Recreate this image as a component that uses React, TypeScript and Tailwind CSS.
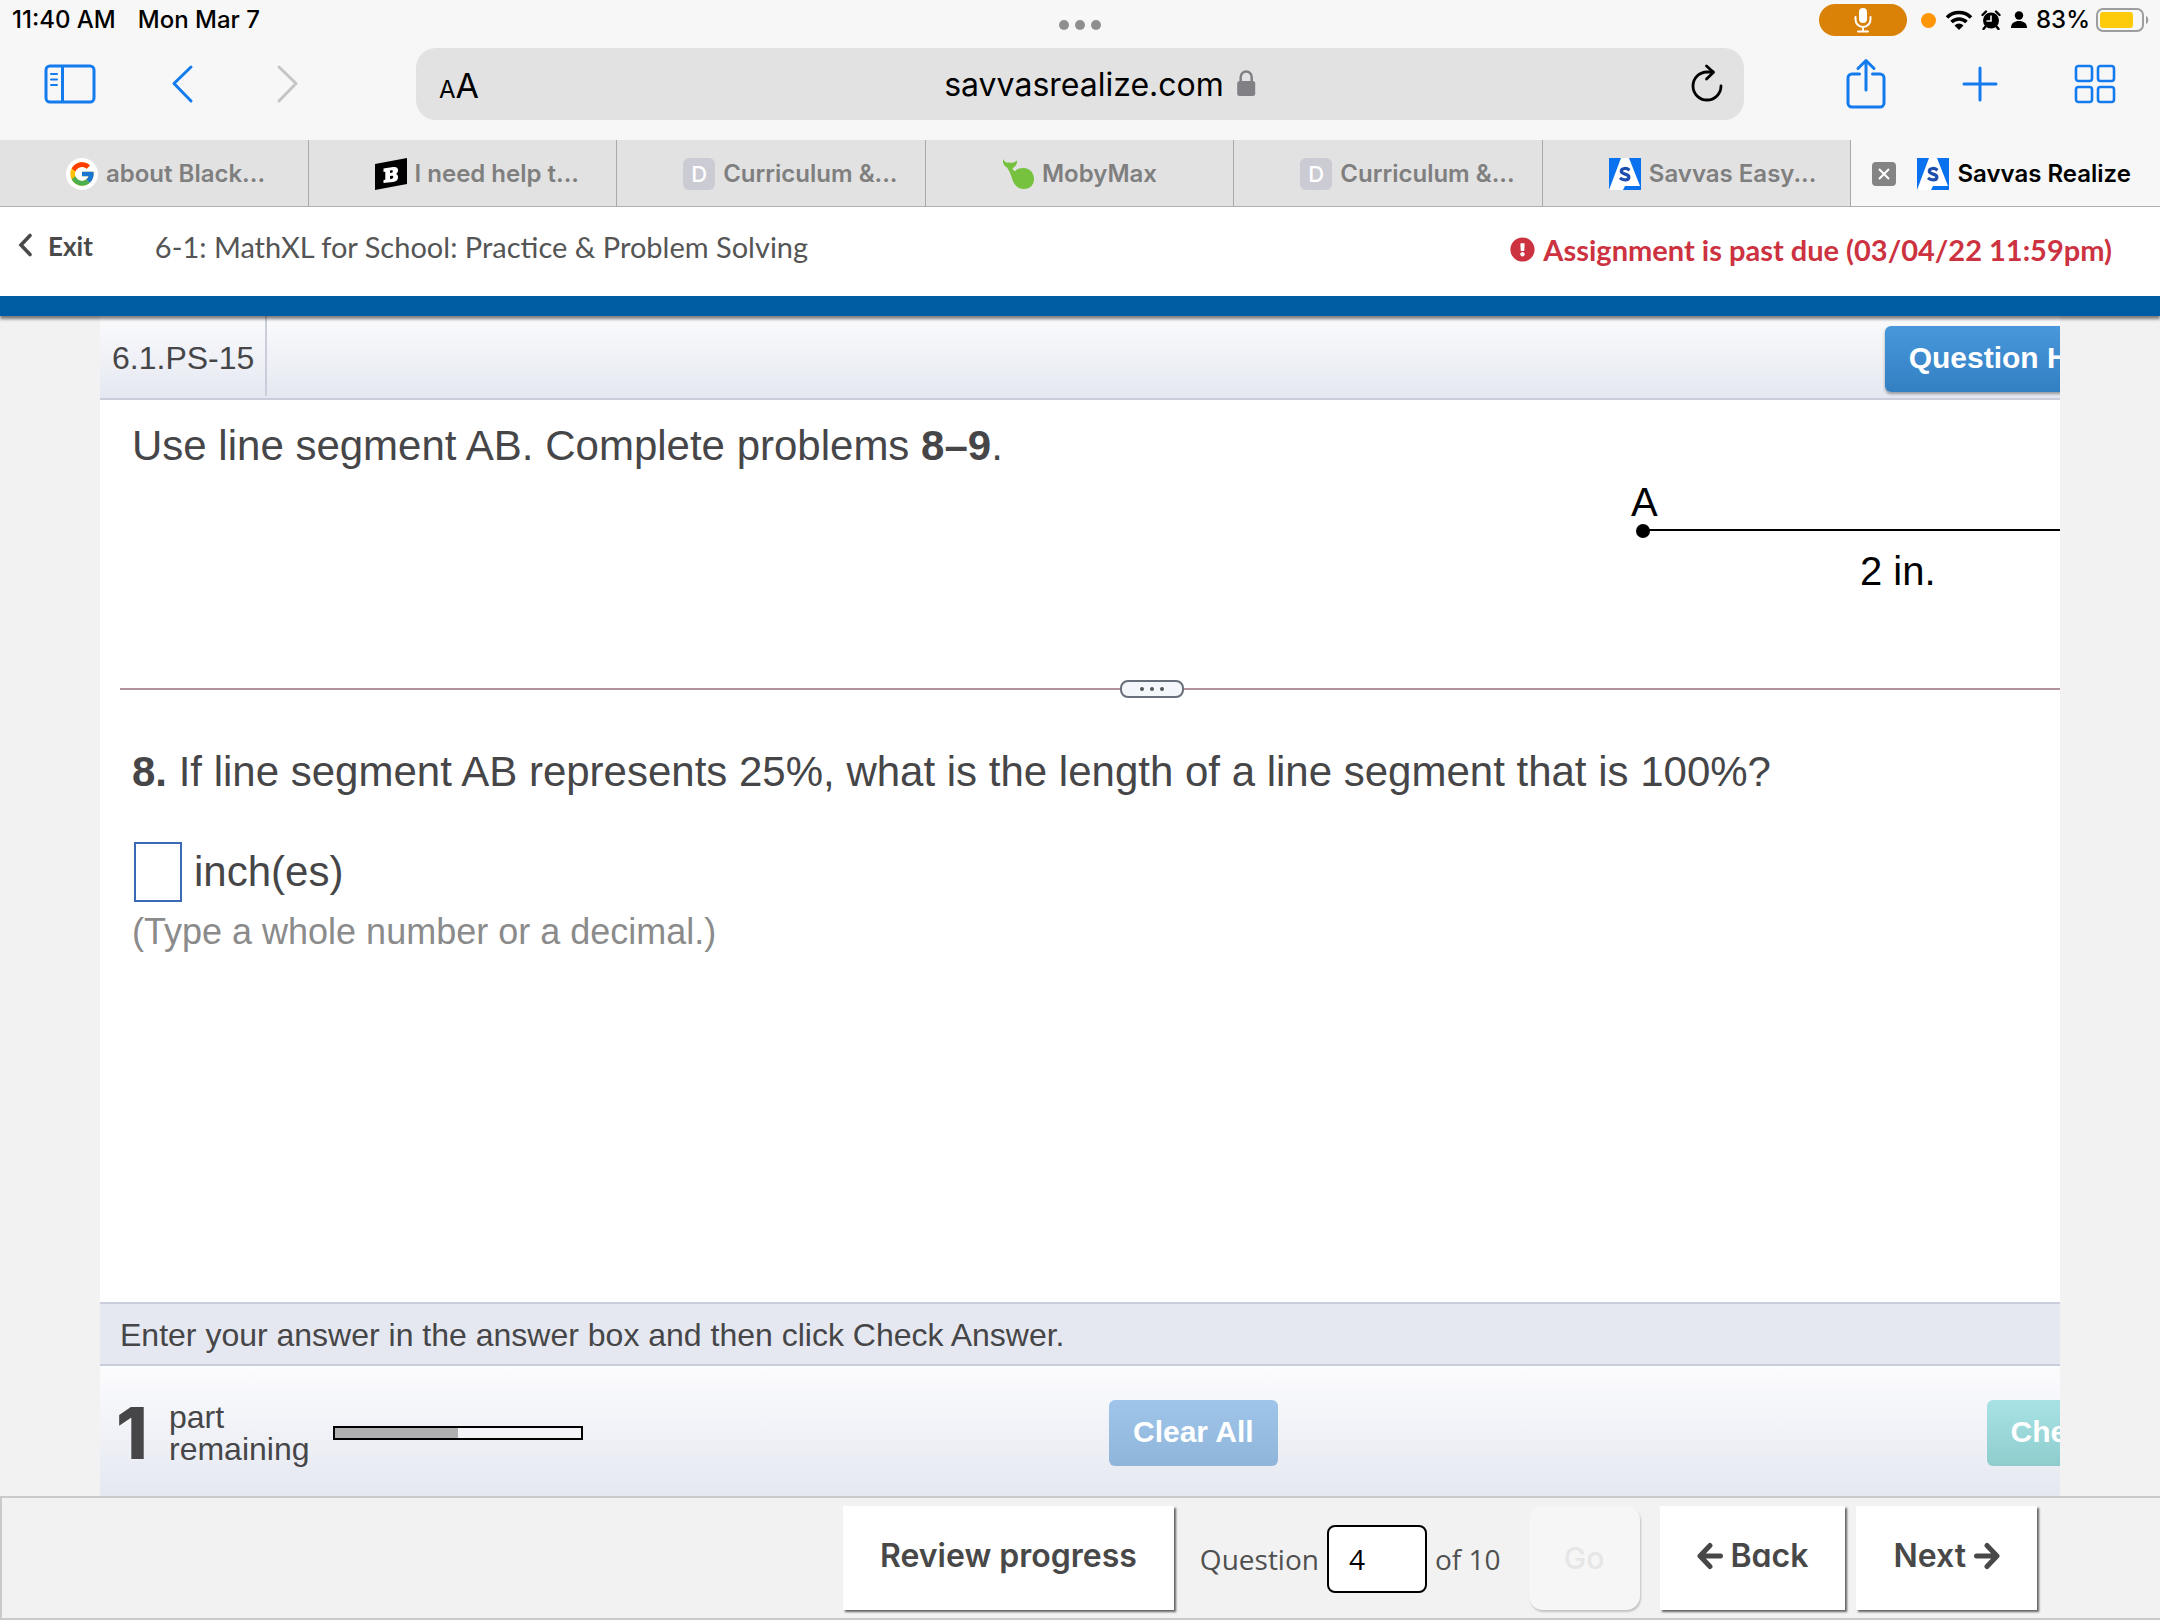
import { type JSX, type ReactNode } from "react";
import { FaExclamationCircle } from "react-icons/fa";
import { FcGoogle } from "react-icons/fc";

type TabItem = {
  title: string;
  icon: ReactNode;
  centered?: boolean;
  active?: boolean;
};

function BrainlyIcon() {
  return (
    <svg viewBox="0 0 32 32" className="h-8 w-8 shrink-0">
      <path d="M0 6 32 0v26L0 32z" fill="#000" />
      <path
        fillRule="evenodd"
        d="M8.500 10.500 18 9c4-.5 5.500 1.500 5 4-.3 1.500-1 2.300-2 3 1.500.6 2.200 1.800 2 3.800-.3 2.700-2 3.800-5 4.200l-9.500 1v-3l1.800-.3v-8l-1.800.3zM15 12.500v2.600l1.700-.3c1.600-.3 1.600-2.800 0-2.500zM15 18v3l2-.3c1.700-.3 1.700-3.200 0-2.900z"
        fill="#fff"
      />
    </svg>
  );
}

function LetterIcon() {
  return (
    <span className="flex h-8 w-8 shrink-0 items-center justify-center rounded-md bg-[#cbcbd3] text-[22px] font-medium text-white">
      D
    </span>
  );
}

function WhaleIcon() {
  return (
    <svg viewBox="0 0 32 32" className="h-8 w-8 shrink-0" fill="#76c23e">
      <path d="M1.500 1C2 4 5 5 8 4.500c1 .5 4 .5 7-2 .5 3.500-2 6.500-4.500 7.500.5 2 1.500 3.500 3 3 1.500-2 4.500-3 8-3C28 10 32 15 32 21s-4 10-10 10-9.500-4-11.500-9C9 17 8 14 5 9.500 2 8 0 4.500 1.500 1z" />
    </svg>
  );
}

function SavvasIcon() {
  return (
    <svg viewBox="0 0 32 32" className="h-8 w-8 shrink-0">
      <rect width="32" height="32" fill="#0a71ef" />
      <path d="M12 0h8l11 28H16l-2 4H0z" fill="#fff" />
      <path
        d="M20.500 12.200c-1.500-1.300-3.200-1.900-5-1.700-2 .2-3.200 1.300-3.200 2.800 0 3.600 7.600 2.100 7.600 5.700 0 1.800-1.600 2.900-3.900 2.900-2 0-3.700-.7-5-2"
        fill="none"
        stroke="#1f4fae"
        strokeWidth="3.200"
      />
    </svg>
  );
}

const tabs: TabItem[] = [
  {
    title: "about Black...",
    icon: (
      <span className="flex h-8 w-8 shrink-0 items-center justify-center rounded-full bg-white">
        <FcGoogle size={28} />
      </span>
    ),
  },
  { title: "I need help t...", icon: <BrainlyIcon /> },
  { title: "Curriculum &...", icon: <LetterIcon /> },
  { title: "MobyMax", icon: <WhaleIcon />, centered: true },
  { title: "Curriculum &...", icon: <LetterIcon /> },
  { title: "Savvas Easy...", icon: <SavvasIcon /> },
  { title: "Savvas Realize", icon: <SavvasIcon />, active: true },
];

function StatusBar() {
  return (
    <div className="relative flex h-10 items-center justify-between pr-[10px] pl-3 text-[24px] font-medium text-black">
      <div className="flex gap-[22px]">
        <span>11:40 AM</span>
        <span>Mon Mar 7</span>
      </div>

      <div className="absolute top-5 left-1/2 flex -translate-x-1/2 gap-[6px]">
        <span className="h-[10px] w-[10px] rounded-full bg-[#8e8e90]" />
        <span className="h-[10px] w-[10px] rounded-full bg-[#8e8e90]" />
        <span className="h-[10px] w-[10px] rounded-full bg-[#8e8e90]" />
      </div>

      <div className="flex items-center">
        <span className="mr-[14px] flex h-8 w-[88px] items-center justify-center rounded-full bg-[#d98207]">
          <svg viewBox="0 0 18 26" className="h-[26px] w-[18px]">
            <rect x="5" y="1" width="8" height="15" rx="4" fill="#fff" />
            <path
              d="M1.500 10v2.500a7.500 7.500 0 0 0 15 0V10M9 20v4M4 24.500h10"
              fill="none"
              stroke="#fff"
              strokeWidth="2"
              strokeLinecap="round"
            />
          </svg>
        </span>
        <span className="mr-[9px] h-[15px] w-[15px] rounded-full bg-[#ff9508]" />
        {/* Wi-Fi */}
        <svg viewBox="0 0 28 20" className="mr-2 h-5 w-7">
          <path
            d="M2 7.500a17 17 0 0 1 24 0M6.500 12a10.700 10.700 0 0 1 15 0"
            fill="none"
            stroke="#000"
            strokeWidth="3.600"
          />
          <path d="M14 20l-4.500-4.600a6.500 6.500 0 0 1 9 0z" fill="#000" />
        </svg>
        {/* Alarm */}
        <svg viewBox="0 0 20 20" className="mr-[10px] h-5 w-5">
          <circle cx="10" cy="10.500" r="8" fill="#000" />
          <path
            d="M1.500 5 5 1.500M18.500 5 15 1.500M4.500 16.500 2.500 19M15.500 16.500l2 2.500"
            stroke="#000"
            strokeWidth="2.400"
            strokeLinecap="round"
          />
          <path d="M10 5.500v5.500H5.500" fill="none" stroke="#f7f7f7" strokeWidth="1.600" />
        </svg>
        <svg viewBox="0 0 16 18" className="mr-[9px] h-[18px] w-4">
          <circle cx="8" cy="4.500" r="4.200" />
          <path d="M0 17c0-5 3.500-7 8-7s8 2 8 7z" />
        </svg>
        <span className="mr-[6px]">83%</span>
        <svg viewBox="0 0 54 24" className="h-6 w-[54px]">
          <rect x="1" y="1" width="46" height="22" rx="6" fill="none" stroke="#9d9d9f" strokeWidth="2" />
          <rect x="4" y="4" width="33" height="16" rx="3" fill="#fdca0a" />
          <path d="M50 8c3 1 3 7 0 8z" fill="#9d9d9f" />
        </svg>
      </div>
    </div>
  );
}

function Toolbar() {
  return (
    <div className="flex items-center pt-2 pr-11 pb-5 pl-11 text-[#147bee]">
      <button type="button" aria-label="Show sidebar">
        <svg viewBox="0 0 52 40" className="h-10 w-[52px]" fill="none" stroke="currentColor" strokeWidth="3">
          <rect x="2" y="2" width="48" height="36" rx="4" />
          <path d="M18.500 2v36" />
          <path d="M7 10h6M7 15.500h6M7 21h6" strokeWidth="2" strokeLinecap="round" />
        </svg>
      </button>
      <button type="button" aria-label="Back" className="ml-[75px]">
        <svg viewBox="0 0 24 40" className="h-10 w-6" fill="none" stroke="currentColor" strokeWidth="3" strokeLinecap="round" strokeLinejoin="round">
          <path d="M20 3 3 19.500 20 37" />
        </svg>
      </button>
      <button type="button" aria-label="Forward" disabled className="ml-20 text-[#c5c5c7]">
        <svg viewBox="0 0 24 40" className="h-10 w-6" fill="none" stroke="currentColor" strokeWidth="3" strokeLinecap="round" strokeLinejoin="round">
          <path d="M4 3l17 16.500L4 37" />
        </svg>
      </button>

      {/* Address bar */}
      <div className="relative mr-[118px] ml-[117px] flex h-[72px] flex-1 items-center justify-between rounded-[20px] bg-[#e2e2e2] pr-5 pl-[23px] text-black">
        <button type="button" aria-label="Reader options" className="flex items-baseline pt-[2px]">
          <span className="text-[24px]">A</span>
          <span className="text-[34px]">A</span>
        </button>
        <div className="absolute inset-y-0 left-1/2 flex -translate-x-1/2 items-center gap-3 pt-[2px] pl-10">
          <span className="text-[32px]">savvasrealize.com</span>
          <svg viewBox="0 0 20 28" className="mb-1 h-7 w-5">
            <rect x="1" y="12" width="18" height="15" rx="2.500" fill="#808085" />
            <path d="M4.500 13V8a5.500 5.500 0 0 1 11 0v5" fill="none" stroke="#808085" strokeWidth="2.500" />
          </svg>
        </div>
        <button type="button" aria-label="Reload">
          <svg viewBox="0 0 34 40" className="h-10 w-[34px]" fill="none" stroke="currentColor" strokeWidth="2.800" strokeLinecap="round" strokeLinejoin="round">
            <path d="M31 22a14 14 0 1 1-14-14h6" />
            <path d="M16.500 2 23.500 8.200 16.500 15" />
          </svg>
        </button>
      </div>

      <div className="flex items-center">
        <button type="button" aria-label="Share" className="-ml-4">
          <svg viewBox="0 0 40 52" className="mb-[2px] h-[52px] w-10" fill="none" stroke="currentColor" strokeWidth="3" strokeLinecap="round" strokeLinejoin="round">
            <path d="M13.500 17H6a4 4 0 0 0-4 4v25a4 4 0 0 0 4 4h28a4 4 0 0 0 4-4V21a4 4 0 0 0-4-4h-7.500" />
            <path d="M20 33V4M12 11.500 20 3.500l8 8" />
          </svg>
        </button>
        <button type="button" aria-label="New tab" className="ml-[76px]">
          <svg viewBox="0 0 36 36" className="h-9 w-9" stroke="currentColor" strokeWidth="3" strokeLinecap="round">
            <path d="M18 2v32M2 18h32" />
          </svg>
        </button>
        <button type="button" aria-label="Tab overview" className="ml-[76px]">
          <svg viewBox="0 0 42 40" className="h-10 w-[42px]" fill="none" stroke="currentColor" strokeWidth="2.600">
            <rect x="2" y="2" width="16" height="15" rx="2.500" />
            <rect x="24" y="2" width="16" height="15" rx="2.500" />
            <rect x="2" y="23" width="16" height="15" rx="2.500" />
            <rect x="24" y="23" width="16" height="15" rx="2.500" />
          </svg>
        </button>
      </div>
    </div>
  );
}

function Tab({ title, icon, centered, active }: TabItem) {
  return (
    <div
      className={`relative flex h-[67px] items-center gap-2 border-b border-[#b0b0b0] pt-[2px] text-[24px] font-semibold whitespace-nowrap ${
        active ? "text-black" : "border-r border-r-[#a9a9a9] bg-[#e2e2e2] text-[#7f7f7f]"
      } ${centered ? "justify-center" : "pl-[66px]"}`}
    >
      {active && (
        <button
          type="button"
          aria-label="Close tab"
          className="absolute left-[21px] flex h-6 w-6 items-center justify-center rounded-sm bg-[#848484]"
        >
          <svg viewBox="0 0 12 12" className="h-3 w-3" stroke="#fff" strokeWidth="2">
            <path d="M1 1l10 10M11 1 1 11" />
          </svg>
        </button>
      )}
      {icon}
      <span>{title}</span>
    </div>
  );
}

function LessonHeader() {
  return (
    <header className="relative z-10 flex h-[109px] items-center justify-between border-b-[20px] border-[#005da4] bg-white pr-12 pb-[10px] pl-[18px] font-[Lato] shadow-[0_3px_3px_rgba(0,0,0,0.5)]">
      <div className="flex items-center">
        <a href="#" className="flex items-center gap-4 text-[26px] font-bold text-[#4a4a4a]">
          <svg viewBox="0 0 14 24" className="mb-1 h-6 w-[14px]" fill="none" stroke="currentColor" strokeWidth="3.600" strokeLinecap="round">
            <path d="M12 2.500 3 12l9 9.500" />
          </svg>
          Exit
        </a>
        <h1 className="ml-[62px] text-[29px] text-[#555]">6-1: MathXL for School: Practice &amp; Problem Solving</h1>
      </div>
      <p className="flex items-center gap-2 pt-[6px] text-[29px] font-bold text-[#cc323f]">
        <FaExclamationCircle size={25} />
        Assignment is past due (03/04/22 11:59pm)
      </p>
    </header>
  );
}

function SegmentFigure() {
  return (
    <svg viewBox="0 0 584 130" className="h-[130px] w-[584px] shrink-0 font-['Liberation_Sans'] text-[40px]">
      <text x="11" y="36">A</text>
      <circle cx="23" cy="51" r="7" />
      <path d="M23 50h512" stroke="#000" strokeWidth="2" />
      <text x="240" y="105">2 in.</text>
    </svg>
  );
}

function Exercise() {
  return (
    <main className="mx-[100px] flex flex-1 flex-col overflow-hidden bg-white font-['Liberation_Sans',Arial,sans-serif] text-[#464648]">
      {/* The player is wider than its frame, so the right edge is cut off */}
      <div className="flex w-[calc(100%+144px)] flex-1 flex-col">
        <div className="flex h-[84px] items-start justify-between border-b-2 border-[#cacddb] bg-linear-to-b from-[#fbfbfd] to-[#e5e8f1] pr-[68px]">
          <div className="flex h-20 items-center border-r-2 border-[#cacddb] pt-1 pr-[11px] pl-3 text-[32px]">6.1.PS-15</div>
          <button
            type="button"
            className="mt-[10px] h-[66px] rounded-md bg-linear-to-b from-[#4998dc] to-[#327fc2] px-6 pb-1 text-[30px] font-bold text-white shadow-[0_2px_3px_rgba(0,0,0,0.35)]"
          >
            Question Help
          </button>
        </div>

        <section className="flex h-[288px] justify-between pl-8 text-[42px]">
          <p className="mt-[22px] leading-[48px]">
            Use line segment AB. Complete problems <b>8–9</b>.
          </p>
          <div className="mt-20">
            <SegmentFigure />
          </div>
        </section>

        {/* Splitter */}
        <div className="relative mx-5 h-[2px] bg-[#b1939d]">
          <button
            type="button"
            aria-label="Resize panes"
            className="absolute -top-2 left-1/2 flex h-[18px] w-16 -translate-x-1/2 items-center justify-center gap-[6px] rounded-lg border-2 border-[#67707a] bg-[#f3f6fa]"
          >
            <span className="h-1 w-1 rounded-full bg-[#555]" />
            <span className="h-1 w-1 rounded-full bg-[#555]" />
            <span className="h-1 w-1 rounded-full bg-[#555]" />
          </button>
        </div>

        <section className="flex-1 pt-[58px] pl-8 text-[42px] leading-[48px]">
          <p>
            <b>8.</b> If line segment AB represents 25%, what is the length of a line segment that is 100%?
          </p>
          <div className="mt-[46px] flex items-center gap-3">
            <input id="answer" type="text" className="ml-[2px] h-[60px] w-12 border-2 border-[#3a69b5] px-1 text-center outline-none" />
            <label htmlFor="answer">inch(es)</label>
          </div>
          <p className="mt-[6px] text-[36px] text-[#8b8b8b]">(Type a whole number or a decimal.)</p>
        </section>

        <p className="flex h-16 items-center border-y-2 border-[#cacddb] bg-[#e5e8f0] pt-[2px] pl-5 text-[32px]">
          Enter your answer in the answer box and then click Check Answer.
        </p>

        <div className="flex h-[130px] items-center bg-linear-to-b from-[#fcfcfe] to-[#e5e8f1] pt-1 pl-4">
          <span className="w-[53px] shrink-0 font-[Inter] text-[72px] leading-[72px] font-extrabold">1</span>
          <label htmlFor="parts" className="w-[164px] shrink-0 text-[32px] leading-8">
            part
            <br />
            remaining
          </label>
          <div
            id="parts"
            role="progressbar"
            aria-valuenow={50}
            className="h-[14px] w-[250px] shrink-0 border-2 border-black bg-[#f4f4f8]"
          >
            <div className="h-full w-1/2 bg-[#b0b0b0]" />
          </div>
          <button
            type="button"
            disabled
            className="ml-[526px] h-[66px] shrink-0 rounded-md bg-linear-to-b from-[#a0c5ea] to-[#8fb5da] px-6 pb-1 text-[30px] font-bold text-white"
          >
            Clear All
          </button>
          <button
            type="button"
            disabled
            className="ml-[709px] h-[66px] shrink-0 rounded-md bg-linear-to-b from-[#a8e2e6] to-[#8fcdcd] px-6 pb-1 text-[30px] font-bold whitespace-nowrap text-white"
          >
            Check Answer
          </button>
        </div>
      </div>
    </main>
  );
}

function Arrow({ right }: { right?: boolean }) {
  return (
    <svg
      viewBox="0 0 26 28"
      className="h-7 w-[26px]"
      fill="none"
      stroke="currentColor"
      strokeWidth="5"
      strokeLinecap="round"
      strokeLinejoin="round"
    >
      <path d={right ? "M2.500 14H22M13 3.500 23 14 13 24.500" : "M23.500 14H4M13 3.500 3 14l10 10.500"} />
    </svg>
  );
}

function NavButton({ children }: { children: ReactNode }) {
  return (
    <button
      type="button"
      className="flex h-[104px] items-center gap-2 bg-white px-[37px] pb-1 text-[32px] font-semibold text-[#484848] shadow-[2px_2px_2px_rgba(0,0,0,0.6)] [font-feature-settings:'cv11']"
    >
      {children}
    </button>
  );
}

function BottomBar() {
  return (
    <footer className="flex h-[124px] items-center justify-end border-y-2 border-l-2 border-[#c8cacb] bg-[#f2f2f2] pr-[123px]">
      <NavButton>Review progress</NavButton>
      <div className="ml-[26px] flex items-center gap-2 pt-[2px] font-['Open_Sans'] text-[28px] text-[#505050]">
        <label htmlFor="question">Question</label>
        <input
          id="question"
          type="text"
          defaultValue="4"
          className="h-[68px] w-[100px] rounded-lg border-2 border-black bg-white px-5 text-black"
        />
        <span>of 10</span>
      </div>
      <button
        type="button"
        disabled
        className="ml-7 h-[104px] w-[111px] rounded-[14px] bg-[#f6f6f6] text-[30px] font-medium text-[#e6e6e6] shadow-[1px_2px_2px_rgba(0,0,0,0.2)]"
      >
        Go
      </button>
      <div className="ml-5 flex gap-[11px]">
        <NavButton>
          <Arrow />
          Back
        </NavButton>
        <NavButton>
          Next
          <Arrow right />
        </NavButton>
      </div>
    </footer>
  );
}

export default function App(): JSX.Element {
  return (
    <div className="flex min-h-screen flex-col bg-[#f2f2f2] font-[Inter,sans-serif]">
      <div className="bg-[#f7f7f7]">
        <StatusBar />
        <Toolbar />
        <nav className="grid grid-cols-7">
          {tabs.map((tab, i) => (
            <Tab key={i} {...tab} />
          ))}
        </nav>
      </div>
      <LessonHeader />
      <Exercise />
      <BottomBar />
    </div>
  );
}
